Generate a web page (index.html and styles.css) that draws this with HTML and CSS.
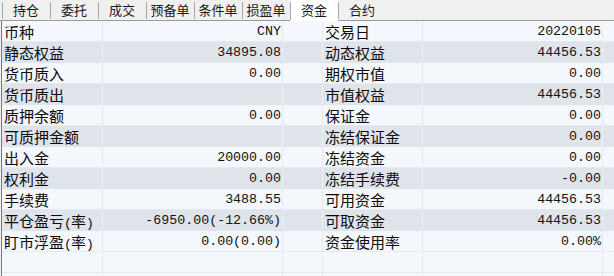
FILE: index.html
```html
<!DOCTYPE html>
<html lang="zh">
<head>
<meta charset="utf-8">
<link rel="stylesheet" href="styles.css">
</head>
<body>
<div class="panel">
  <div class="tabs">
    <div class="tab">持仓</div>
    <div class="tab">委托</div>
    <div class="tab">成交</div>
    <div class="tab">预备单</div>
    <div class="tab">条件单</div>
    <div class="tab">损盈单</div>
    <div class="tab active">资金</div>
    <div class="tab">合约</div>
  </div>
  <div class="grid">
    <div class="row"><div class="c lab">币种</div><div class="c val">CNY</div><div class="c gap"></div><div class="c lab">交易日</div><div class="c val">20220105</div><div class="c end"></div></div>
    <div class="row alt"><div class="c lab">静态权益</div><div class="c val">34895.08</div><div class="c gap"></div><div class="c lab">动态权益</div><div class="c val">44456.53</div><div class="c end"></div></div>
    <div class="row"><div class="c lab">货币质入</div><div class="c val">0.00</div><div class="c gap"></div><div class="c lab">期权市值</div><div class="c val">0.00</div><div class="c end"></div></div>
    <div class="row alt"><div class="c lab">货币质出</div><div class="c val"></div><div class="c gap"></div><div class="c lab">市值权益</div><div class="c val">44456.53</div><div class="c end"></div></div>
    <div class="row"><div class="c lab">质押余额</div><div class="c val">0.00</div><div class="c gap"></div><div class="c lab">保证金</div><div class="c val">0.00</div><div class="c end"></div></div>
    <div class="row alt"><div class="c lab">可质押金额</div><div class="c val"></div><div class="c gap"></div><div class="c lab">冻结保证金</div><div class="c val">0.00</div><div class="c end"></div></div>
    <div class="row"><div class="c lab">出入金</div><div class="c val">20000.00</div><div class="c gap"></div><div class="c lab">冻结资金</div><div class="c val">0.00</div><div class="c end"></div></div>
    <div class="row alt"><div class="c lab">权利金</div><div class="c val">0.00</div><div class="c gap"></div><div class="c lab">冻结手续费</div><div class="c val">-0.00</div><div class="c end"></div></div>
    <div class="row"><div class="c lab">手续费</div><div class="c val">3488.55</div><div class="c gap"></div><div class="c lab">可用资金</div><div class="c val">44456.53</div><div class="c end"></div></div>
    <div class="row alt"><div class="c lab">平仓盈亏<span class="par">(</span>率<span class="par">)</span></div><div class="c val">-6950.00(-12.66%)</div><div class="c gap"></div><div class="c lab">可取资金</div><div class="c val">44456.53</div><div class="c end"></div></div>
    <div class="row"><div class="c lab">盯市浮盈<span class="par">(</span>率<span class="par">)</span></div><div class="c val">0.00(0.00)</div><div class="c gap"></div><div class="c lab">资金使用率</div><div class="c val">0.00%</div><div class="c end"></div></div>
    <div class="row"><div class="c lab"></div><div class="c val"></div><div class="c gap"></div><div class="c lab"></div><div class="c val"></div><div class="c end"></div></div>
    <div class="row"><div class="c lab"></div><div class="c val"></div><div class="c gap"></div><div class="c lab"></div><div class="c val"></div><div class="c end"></div></div>
  </div>
</div>
</body>
</html>
```
FILE: styles.css
```css
* { box-sizing: border-box; }
html, body {
  margin: 0;
  padding: 0;
  width: 614px;
  height: 276px;
  overflow: hidden;
  background: #f0f0f0;
}
.panel {
  width: 614px;
  height: 276px;
  overflow: hidden;
  font-family: "Noto Sans CJK SC", "Liberation Sans", sans-serif;
  color: #000;
}
.tabs {
  display: flex;
  height: 21px;
  padding-left: 2px;
  border-bottom: 1px solid #9a9a9a;
  background: #f0f0f0;
}
.tab {
  width: 48px;
  height: 20px;
  font-size: 13px;
  line-height: 20px;
  text-align: center;
  position: relative;
  color: #1a1a1a;
}
.tab::before {
  content: "";
  position: absolute;
  left: 0;
  top: 2px;
  bottom: 1px;
  border-left: 1px solid #a8a8a8;
}
.tab.active {
  background: #fff;
  height: 21px;
}
.grid {
  margin-left: 1px;
  border-left: 1px solid #7a7a7a;
  height: 255px;
  background: #f4f7fb;
}
.row {
  display: grid;
  grid-template-columns: 101px 180px 40px 100px 180px 1fr;
  height: 21px;
  background: #f4f7fb;
  border-bottom: 1px solid #e6eaf0;
}
.row.alt {
  background: #dfe4eb;
  border-bottom-color: #dfe4eb;
}
.c {
  height: 20px;
  border-right: 1px solid #e4e8ee;
  white-space: nowrap;
  overflow: hidden;
}
.row.alt .c { border-right-color: #eef1f5; }
.lab {
  font-size: 15px;
  line-height: 21px;
  padding-left: 2px;
  color: #0a0a0a;
}
.par {
  font-family: "Liberation Mono", monospace;
  font-size: 13px;
  display: inline-block;
  width: 7px;
  text-align: center;
}
.val {
  font-family: "Liberation Mono", "DejaVu Sans Mono", monospace;
  font-size: 13.3px;
  line-height: 21px;
  text-align: right;
  padding-right: 1px;
  color: #111;
}
.end { border-right: none; }
```
